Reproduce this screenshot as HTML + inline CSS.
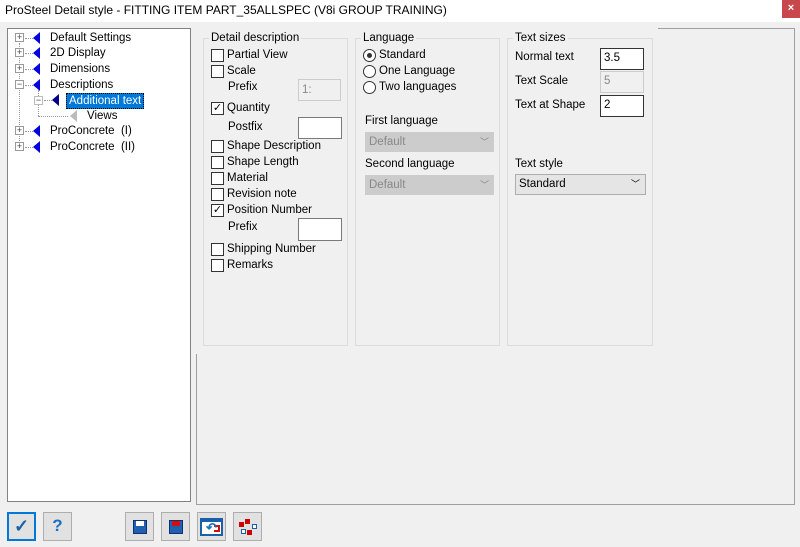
<!DOCTYPE html>
<html><head><style>
*{margin:0;padding:0;box-sizing:border-box}
body{width:800px;height:547px;background:#f0f0f0;font-family:"Liberation Sans",sans-serif;font-size:11.5px;color:#000;position:relative;overflow:hidden}
.a{position:absolute;white-space:nowrap}
.t{position:absolute;white-space:nowrap;line-height:14px}
.cb{position:absolute;width:13px;height:13px;border:1px solid #333;background:#fff}
.rb{position:absolute;width:13px;height:13px;border:1px solid #333;border-radius:50%;background:#fff}
.in{position:absolute;background:#fff;border:1px solid #7a7a7a}
.dis{position:absolute;background:#f0f0f0;border:1px solid #ccc;color:#888}
.gb{position:absolute;border:1px solid #dcdcdc}
.gl{position:absolute;background:#f0f0f0;padding:0 2px;line-height:14px}
.cmbd{position:absolute;background:#ccc;border:1px solid #ccc;color:#888;padding-left:3px;line-height:18px}
.btn{position:absolute;width:29px;height:29px;background:#e1e1e1;border:1px solid #adadad}
.exp{position:absolute;width:9px;height:9px;border:1px solid #999;background:#fff;font-size:9px;line-height:7px;text-align:center;color:#444}
.tri{position:absolute;width:0;height:0;border-top:6px solid transparent;border-bottom:6px solid transparent;border-right:7px solid #0000e0}
.dot{position:absolute;border-top:1px dotted #999;width:8px}
</style></head><body>
<div class="a" style="left:0;top:0;width:800px;height:22px;background:#fff"></div>
<div class="t" style="left:5px;top:3px;font-size:12px">ProSteel Detail style - FITTING ITEM PART_35ALLSPEC (V8i GROUP TRAINING)</div>
<div class="a" style="left:782px;top:0;width:18px;height:18px;background:#c8474c;color:#fff;font-size:11px;text-align:center;line-height:16px;font-weight:bold">×</div>

<!-- outer frame -->
<div class="a" style="left:196px;top:28px;width:599px;height:477px;border:1px solid #a0a0a0;border-right-color:#a0a0a0;border-bottom-color:#a0a0a0"></div>
<div class="a" style="left:190px;top:22px;width:468px;height:332px;background:#f0f0f0"></div>

<!-- tree -->
<div class="a" style="left:7px;top:28px;width:184px;height:474px;background:#fff;border:1px solid #828282"></div>
<div class="a" style="left:19px;top:43px;height:100px;border-left:1px dotted #999"></div>
<div class="exp" style="left:15px;top:33px">+</div><div class="dot" style="left:25px;top:38px"></div><div class="tri" style="left:33px;top:32px"></div><div class="t" style="left:50px;top:31px">Default Settings</div>
<div class="exp" style="left:15px;top:48px">+</div><div class="dot" style="left:25px;top:53px"></div><div class="tri" style="left:33px;top:47px"></div><div class="t" style="left:50px;top:46px">2D Display</div>
<div class="exp" style="left:15px;top:64px">+</div><div class="dot" style="left:25px;top:69px"></div><div class="tri" style="left:33px;top:63px"></div><div class="t" style="left:50px;top:62px">Dimensions</div>
<div class="exp" style="left:15px;top:80px">−</div><div class="dot" style="left:25px;top:85px"></div><div class="tri" style="left:33px;top:79px"></div><div class="t" style="left:50px;top:78px">Descriptions</div>
<div class="a" style="left:38px;top:90px;height:26px;border-left:1px dotted #999"></div>
<div class="exp" style="left:34px;top:96px;border-color:#bbb">−</div><div class="dot" style="left:44px;top:100px"></div><div class="tri" style="left:52px;top:94px;border-right-color:#00008b"></div>
<div class="t" style="left:66px;top:93px;background:#0078d7;color:#fff;padding:0 2px;border:1px dotted #000">Additional text</div>
<div class="dot" style="left:38px;top:116px;width:30px"></div><div class="tri" style="left:70px;top:110px;border-right-color:#bbb"></div><div class="t" style="left:87px;top:109px">Views</div>
<div class="exp" style="left:15px;top:126px">+</div><div class="dot" style="left:25px;top:131px"></div><div class="tri" style="left:33px;top:125px"></div><div class="t" style="left:50px;top:124px">ProConcrete&nbsp; (I)</div>
<div class="exp" style="left:15px;top:142px">+</div><div class="dot" style="left:25px;top:147px"></div><div class="tri" style="left:33px;top:141px"></div><div class="t" style="left:50px;top:140px">ProConcrete&nbsp; (II)</div>

<!-- group 1 -->
<div class="gb" style="left:203px;top:38px;width:145px;height:308px"></div>
<div class="gl" style="left:209px;top:31px">Detail description</div>
<div class="cb" style="left:211px;top:49px"></div><div class="t" style="left:227px;top:48px">Partial View</div>
<div class="cb" style="left:211px;top:65px"></div><div class="t" style="left:227px;top:64px">Scale</div>
<div class="t" style="left:228px;top:80px">Prefix</div><div class="dis" style="left:298px;top:79px;width:43px;height:22px;padding:3px;line-height:14px">1:</div>
<div class="cb" style="left:211px;top:102px;font-size:11px;line-height:10px;text-align:center">✓</div><div class="t" style="left:227px;top:101px">Quantity</div>
<div class="t" style="left:228px;top:120px">Postfix</div><div class="in" style="left:298px;top:117px;width:44px;height:22px"></div>
<div class="cb" style="left:211px;top:140px"></div><div class="t" style="left:227px;top:139px">Shape Description</div>
<div class="cb" style="left:211px;top:156px"></div><div class="t" style="left:227px;top:155px">Shape Length</div>
<div class="cb" style="left:211px;top:172px"></div><div class="t" style="left:227px;top:171px">Material</div>
<div class="cb" style="left:211px;top:188px"></div><div class="t" style="left:227px;top:187px">Revision note</div>
<div class="cb" style="left:211px;top:204px;font-size:11px;line-height:10px;text-align:center">✓</div><div class="t" style="left:227px;top:203px">Position Number</div>
<div class="t" style="left:228px;top:220px">Prefix</div><div class="in" style="left:298px;top:218px;width:44px;height:23px"></div>
<div class="cb" style="left:211px;top:243px"></div><div class="t" style="left:227px;top:242px">Shipping Number</div>
<div class="cb" style="left:211px;top:259px"></div><div class="t" style="left:227px;top:258px">Remarks</div>

<!-- group 2 -->
<div class="gb" style="left:355px;top:38px;width:145px;height:308px"></div>
<div class="gl" style="left:361px;top:31px">Language</div>
<div class="rb" style="left:363px;top:49px"><div style="position:absolute;left:3px;top:3px;width:5px;height:5px;border-radius:50%;background:#333"></div></div><div class="t" style="left:379px;top:48px">Standard</div>
<div class="rb" style="left:363px;top:65px"></div><div class="t" style="left:379px;top:64px">One Language</div>
<div class="rb" style="left:363px;top:81px"></div><div class="t" style="left:379px;top:80px">Two languages</div>
<div class="t" style="left:365px;top:114px">First language</div>
<div class="cmbd" style="left:365px;top:132px;width:129px;height:20px">Default<span style="position:absolute;right:4px;top:0;font-size:9px">﹀</span></div>
<div class="t" style="left:365px;top:157px">Second language</div>
<div class="cmbd" style="left:365px;top:175px;width:129px;height:20px">Default<span style="position:absolute;right:4px;top:0;font-size:9px">﹀</span></div>

<!-- group 3 -->
<div class="gb" style="left:507px;top:38px;width:146px;height:308px"></div>
<div class="gl" style="left:513px;top:31px">Text sizes</div>
<div class="t" style="left:515px;top:50px">Normal text</div><div class="in" style="left:600px;top:48px;width:44px;height:22px;border-color:#333;padding:2px 3px;line-height:14px">3.5</div>
<div class="t" style="left:515px;top:74px">Text Scale</div><div class="dis" style="left:600px;top:71px;width:44px;height:22px;padding:2px 3px;line-height:14px">5</div>
<div class="t" style="left:515px;top:98px">Text at Shape</div><div class="in" style="left:600px;top:95px;width:44px;height:22px;border-color:#333;padding:2px 3px;line-height:14px">2</div>
<div class="t" style="left:515px;top:157px">Text style</div>
<div class="a" style="left:515px;top:174px;width:131px;height:21px;background:#e5e5e5;border:1px solid #adadad;padding-left:3px;line-height:19px">Standard<span style="position:absolute;right:5px;top:0;font-size:9px">﹀</span></div>

<!-- buttons -->
<div class="btn" style="left:7px;top:512px;border:2px solid #0078d7;color:#1a5fa8;font-size:18px;text-align:center;line-height:24px;font-weight:bold">✓</div>
<div class="btn" style="left:43px;top:512px;color:#1a6fc0;font-size:17px;text-align:center;line-height:26px;font-weight:bold">?</div>
<div class="btn" style="left:125px;top:512px"><div style="position:absolute;left:7px;top:7px;width:14px;height:14px;background:#2060b0;border:1px solid #103070"><div style="position:absolute;left:2px;top:0;width:8px;height:5px;background:#fff"></div></div></div>
<div class="btn" style="left:161px;top:512px"><div style="position:absolute;left:7px;top:7px;width:14px;height:14px;background:#2060b0;border:1px solid #103070"><div style="position:absolute;left:2px;top:0;width:8px;height:5px;background:#d01010"></div></div></div>
<div class="btn" style="left:197px;top:512px"><div style="position:absolute;left:2px;top:5px;width:23px;height:18px;background:#fff;border:2px solid #1a5fa8;border-top-width:4px"><div style="position:absolute;left:12px;top:3px;width:6px;height:7px;border:2px solid #d01010;border-left:none"></div><div style="position:absolute;left:4px;top:0;color:#1a6fc0;font-size:13px;line-height:12px;font-weight:bold">↶</div></div></div>
<div class="btn" style="left:233px;top:512px">
<div style="position:absolute;left:5px;top:9px;width:5px;height:5px;background:#c00"></div>
<div style="position:absolute;left:11px;top:6px;width:5px;height:5px;background:#c00"></div>
<div style="position:absolute;left:18px;top:11px;width:5px;height:5px;border:1px solid #1a5fa8;background:#fff"></div>
<div style="position:absolute;left:7px;top:16px;width:5px;height:5px;border:1px solid #1a5fa8;background:#fff"></div>
<div style="position:absolute;left:13px;top:17px;width:5px;height:5px;background:#c00"></div>
</div>
</body></html>
